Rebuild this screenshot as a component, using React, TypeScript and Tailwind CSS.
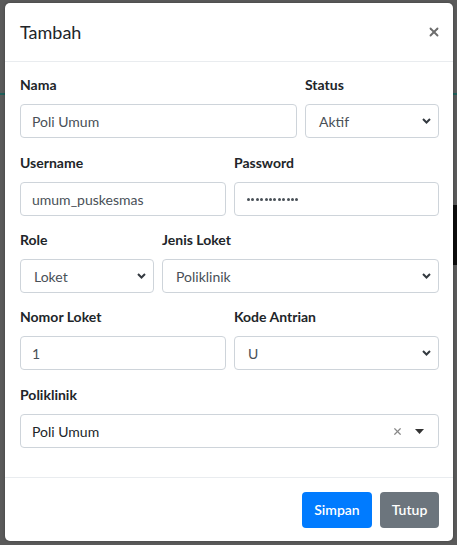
import { X } from "lucide-react"

const font = { fontFamily: '"Source Sans Pro", Lato, "Liberation Sans", sans-serif' }

function Label({ children }: { children: React.ReactNode }) {
  return <div className="mb-[7px] h-[20px] text-[14px] leading-[16px] font-bold text-[#212529]">{children}</div>
}

function Chevron() {
  return (
    <svg width="9" height="6" viewBox="0 0 9 6" className="shrink-0">
      <path d="M1 1l3.5 3.5L8 1" fill="none" stroke="#343a40" strokeWidth="2" />
    </svg>
  )
}

function Input({ value }: { value: string }) {
  return (
    <div className="flex h-[34px] items-center rounded-[4px] border border-[#ced4da] bg-white px-[11px] text-[14px] text-[#495057]">
      {value}
    </div>
  )
}

function PasswordInput({ length }: { length: number }) {
  return (
    <div className="flex h-[34px] items-center gap-[1.4px] rounded-[4px] border border-[#ced4da] bg-white px-[12px]">
      {Array.from({ length }).map((_, i) => (
        <span key={i} className="h-[3px] w-[3px] rounded-full bg-[#495057]" />
      ))}
    </div>
  )
}

function Select({ value }: { value: string }) {
  return (
    <div className="flex h-[34px] items-center justify-between rounded-[4px] border border-[#ced4da] bg-white pl-[13px] pr-[7px] text-[14px] text-[#495057]">
      <span>{value}</span>
      <Chevron />
    </div>
  )
}

export default function App() {
  return (
    <div className="relative h-[545px] w-[457px] overflow-hidden bg-[#5a5a5a]" style={font}>
      {/* page behind the overlay */}
      <div className="mt-[93px] h-[2px] w-full bg-[#1f5f5a]" />
      <div className="ml-auto mt-[110px] h-[60px] w-[5px] bg-[#0d0d0d]" />

      <div className="absolute left-[5px] top-[3px] w-[448px] rounded-[5px] bg-white shadow-[0_0_3px_rgba(0,0,0,0.3)]">
        <div className="flex h-[59px] items-center justify-between border-b border-[#e9ecef] pl-[15px] pr-[14px]">
          <div className="text-[18px] text-[#212529]">Tambah</div>
          <X className="mr-[-2px] text-[#6d6d6d]" size={14} strokeWidth={3.2} />
        </div>

        <div className="pl-[15px] pr-[14px] pt-[15px] pb-[13px]">
          <div className="mb-[17px] grid grid-cols-[277px_1fr] gap-x-[8px]">
            <div>
              <Label>Nama</Label>
              <Input value="Poli Umum" />
            </div>
            <div>
              <Label>Status</Label>
              <Select value="Aktif" />
            </div>
          </div>

          <div className="mb-[16px] grid grid-cols-[206px_1fr] gap-x-[8px]">
            <div>
              <Label>Username</Label>
              <Input value="umum_puskesmas" />
            </div>
            <div>
              <Label>Password</Label>
              <PasswordInput length={12} />
            </div>
          </div>

          <div className="mb-[16px] grid grid-cols-[134px_1fr] gap-x-[8px]">
            <div>
              <Label>Role</Label>
              <Select value="Loket" />
            </div>
            <div>
              <Label>Jenis Loket</Label>
              <Select value="Poliklinik" />
            </div>
          </div>

          <div className="mb-[17px] grid grid-cols-[206px_1fr] gap-x-[8px]">
            <div>
              <Label>Nomor Loket</Label>
              <Input value="1" />
            </div>
            <div>
              <Label>Kode Antrian</Label>
              <Select value="U" />
            </div>
          </div>

          <div className="mb-[16px]">
            <Label>Poliklinik</Label>
            <div className="flex h-[34px] items-center rounded-[4px] border border-[#ced4da] bg-white pl-[11px] pr-[14px] text-[14px] text-[#212529]">
              <span className="flex-1">Poli Umum</span>
              <X className="mr-[12px] text-[#888]" size={11} strokeWidth={2.6} />
              <svg width="9" height="5" viewBox="0 0 9 5">
                <path d="M0 0h9L4.5 5z" fill="#333" />
              </svg>
            </div>
          </div>
        </div>

        <div className="flex h-[64px] items-center justify-end gap-[8px] border-t border-[#e9ecef] pl-[15px] pr-[14px]">
          <button className="h-[36px] w-[70px] rounded-[4px] bg-[#007bff] text-[14px] font-semibold text-white">Simpan</button>
          <button className="h-[36px] w-[59px] rounded-[4px] bg-[#6c757d] text-[14px] font-semibold text-white">Tutup</button>
        </div>
      </div>
    </div>
  )
}
